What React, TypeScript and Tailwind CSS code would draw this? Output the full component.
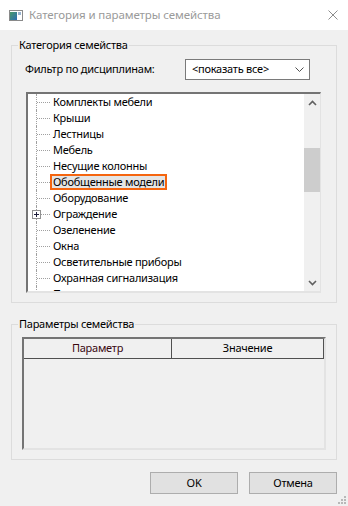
import React from "react";

const items = [
  "Комплекты мебели",
  "Крыши",
  "Лестницы",
  "Мебель",
  "Несущие колонны",
  "Обобщенные модели",
  "Оборудование",
  "Ограждение",
  "Озеленение",
  "Окна",
  "Осветительные приборы",
  "Охранная сигнализация",
  "Парковка",
];

const selected = "Обобщенные модели";
const expandable = "Ограждение";

const TreeRow = ({ label }: { label: string }) => {
  const isSelected = label === selected;
  return (
    <div className="flex h-[16px] shrink-0 pl-[8px]">
      <div className="relative flex w-[14px] items-center border-l border-dotted border-[#a0a0a0]">
        <div className="w-full border-t border-dotted border-[#a0a0a0]" />
        {label === expandable && (
          <div className="absolute left-[-5px] top-[4px] flex h-[9px] w-[9px] items-center justify-center border border-[#919191] bg-white">
            <svg width="5" height="5" viewBox="0 0 5 5">
              <path d="M0 2.5H5M2.5 0V5" stroke="#1e1e3c" strokeWidth="1" />
            </svg>
          </div>
        )}
      </div>
      {isSelected ? (
        <div className="h-[16px] whitespace-nowrap border-2 border-[#f5650f] bg-[#e5e5e5] px-[1px] leading-[12px]">
          {label}
        </div>
      ) : (
        <div className="h-[16px] whitespace-nowrap px-[3px] leading-[16px]">{label}</div>
      )}
    </div>
  );
};

const Chevron = ({ up }: { up?: boolean }) => (
  <svg width="9" height="6" viewBox="0 0 9 6">
    <path
      d={up ? "M1 5L4.5 1.5L8 5" : "M1 1L4.5 4.5L8 1"}
      fill="none"
      stroke="#606060"
      strokeWidth="1.6"
    />
  </svg>
);

const App = () => {
  return (
    <div className="relative flex h-[506px] w-[348px] flex-col overflow-hidden bg-[#f0f0f0] font-['Noto_Sans',sans-serif] text-[11px] tracking-[-0.25px] text-black">
      {/* title bar */}
      <div className="flex h-[30px] shrink-0 items-center bg-white">
        <svg className="ml-[9px]" width="14" height="11" viewBox="0 0 14 11">
          <defs>
            <linearGradient id="ic" x1="0" y1="0" x2="1" y2="1">
              <stop offset="0" stopColor="#4a9a6a" />
              <stop offset="1" stopColor="#2e6db4" />
            </linearGradient>
          </defs>
          <rect x="0.5" y="0.5" width="13" height="10" fill="#fff" stroke="#8a8a8a" />
          <rect x="1" y="2" width="7" height="8" fill="url(#ic)" />
          <rect x="9" y="2" width="3" height="3" fill="#9ab4d0" />
        </svg>
        <span className="ml-[6px] text-[11.5px] tracking-[-0.1px] text-[#9a9a9a]">Категория и параметры семейства</span>
        <svg className="ml-auto mr-[10px]" width="10" height="10" viewBox="0 0 10 10">
          <path d="M0.5 0.5L9.5 9.5M9.5 0.5L0.5 9.5" stroke="#8c8c8c" strokeWidth="1" />
        </svg>
      </div>

      <div className="flex flex-col px-[11px]">
        {/* category group */}
        <fieldset className="mt-[7px] border border-[#dcdcdc] px-0 pb-[9px]">
          <legend className="ml-[6px] px-[1px] leading-[16px]">Категория семейства</legend>
          <div className="mt-[6px] flex h-[21px] items-center">
            <span className="ml-[13px] w-[160px]">Фильтр по дисциплинам:</span>
            <div className="flex h-[21px] w-[125px] items-center border border-[#7a7a7a] bg-white pl-[6px] pr-[5px]">
              <span>&lt;показать все&gt;</span>
              <svg className="ml-auto" width="9" height="6" viewBox="0 0 9 6">
                <path d="M0.5 0.5L4.5 4.5L8.5 0.5" fill="none" stroke="#505050" strokeWidth="1" />
              </svg>
            </div>
          </div>
          <div className="ml-[14px] mt-[12px] flex h-[201px] w-[295px] border-b-2 border-l-2 border-r border-t-2 border-b-[#e3e3e3] border-l-[#747474] border-r-[#e3e3e3] border-t-[#747474] bg-white">
            <div className="flex flex-1 flex-col overflow-hidden">
              {items.map((label) => (
                <TreeRow key={label} label={label} />
              ))}
            </div>
            <div className="flex w-[16px] flex-col bg-[#f0f0f0]">
              <div className="flex h-[17px] items-center justify-center">
                <Chevron up />
              </div>
              <div className="flex-1">
                <div className="mt-[37px] h-[44px] bg-[#cdcdcd]" />
              </div>
              <div className="flex h-[17px] items-center justify-center">
                <Chevron />
              </div>
            </div>
          </div>
        </fieldset>

        {/* parameters group */}
        <fieldset className="mt-[13px] border border-[#dcdcdc] px-0 pb-[9px]">
          <legend className="ml-[6px] px-[1px] leading-[16px]">Параметры семейства</legend>
          <div className="ml-[10px] mt-[5px] flex h-[113px] w-[304px] flex-col border-b-2 border-l-2 border-r-2 border-t-2 border-b-[#e3e3e3] border-l-[#747474] border-r-[#e3e3e3] border-t-[#747474]">
            <div className="flex h-[20px] border-b border-r border-[#505050]">
              <div className="flex w-[148px] items-center justify-center border-r border-[#505050] text-[#3a0810]">
                Параметр
              </div>
              <div className="flex flex-1 items-center justify-center">Значение</div>
            </div>
          </div>
        </fieldset>

        {/* buttons */}
        <div className="mt-[12px] flex justify-end gap-[11px]">
          <button className="h-[22px] w-[88px] border border-[#adadad] bg-[#e1e1e1]">OK</button>
          <button className="h-[22px] w-[88px] border border-[#adadad] bg-[#e1e1e1]">Отмена</button>
        </div>
      </div>

      {/* resize grip */}
      <svg className="absolute bottom-[2px] right-[2px]" width="8" height="8" viewBox="0 0 8 8">
        <rect x="6" y="0" width="2" height="2" fill="#b8b8b8" />
        <rect x="3" y="3" width="2" height="2" fill="#b8b8b8" />
        <rect x="6" y="3" width="2" height="2" fill="#b8b8b8" />
        <rect x="0" y="6" width="2" height="2" fill="#b8b8b8" />
        <rect x="3" y="6" width="2" height="2" fill="#b8b8b8" />
        <rect x="6" y="6" width="2" height="2" fill="#b8b8b8" />
      </svg>
    </div>
  );
};

export default App;
